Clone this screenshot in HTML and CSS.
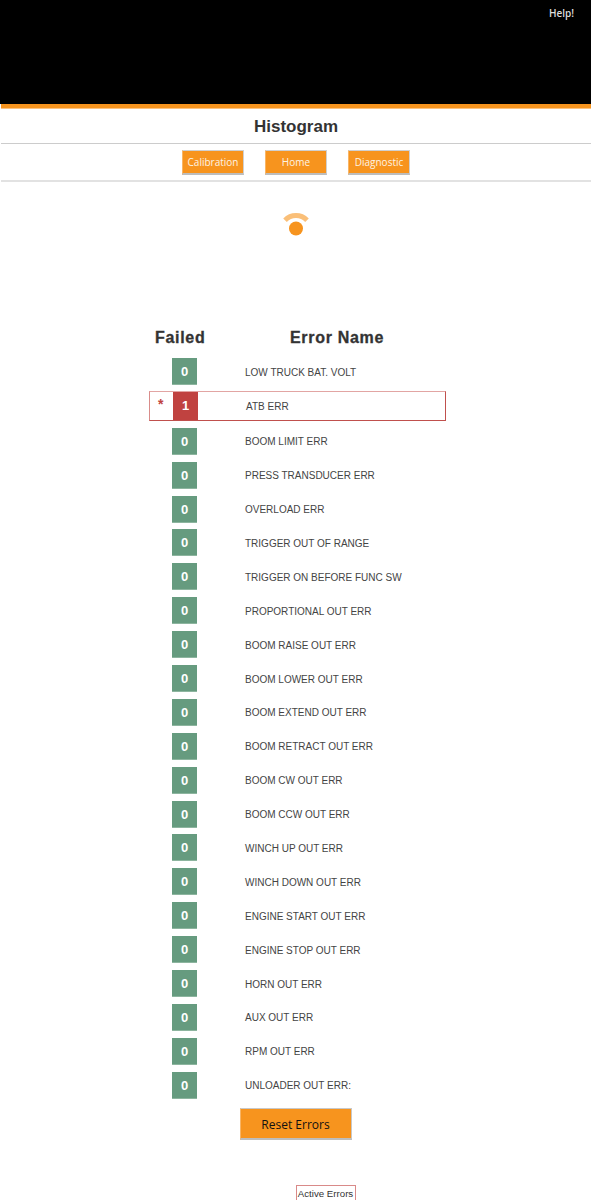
FILE: index.html
```html
<!DOCTYPE html>
<html lang="en">
<head>
    <meta charset="UTF-8">
    <meta name="viewport" content="width=device-width, initial-scale=1.0">
    <title>Histogram</title>
    <link rel="stylesheet" href="styles.css">
</head>
<body>
    <div class="header">
        <a href="#" class="help">Help!</a>
    </div>
    <div class="header-bar"></div>

    <h1 class="page-title">Histogram</h1>

    <div class="nav">
        <a href="#" class="nav-btn">Calibration</a>
        <a href="#" class="nav-btn">Home</a>
        <a href="#" class="nav-btn">Diagnostic</a>
    </div>

    <div class="signal">
        <svg width="26" height="24" viewBox="0 0 26 24">
            <path class="signal-arc" d="M2 7.2 A15.5 15.5 0 0 1 24 7.2"/>
            <circle class="signal-dot" cx="13" cy="15.5" r="7"/>
        </svg>
    </div>

    <div class="errors">
        <div class="errors-head">
            <div class="head-failed">Failed</div>
            <div class="head-name">Error Name</div>
        </div>

        <div class="error-row"><span class="count">0</span><span class="error-name">LOW TRUCK BAT. VOLT</span></div>
        <div class="error-row active"><span class="star">*</span><span class="count">1</span><span class="error-name">ATB ERR</span></div>
        <div class="error-row"><span class="count">0</span><span class="error-name">BOOM LIMIT ERR</span></div>
        <div class="error-row"><span class="count">0</span><span class="error-name">PRESS TRANSDUCER ERR</span></div>
        <div class="error-row"><span class="count">0</span><span class="error-name">OVERLOAD ERR</span></div>
        <div class="error-row"><span class="count">0</span><span class="error-name">TRIGGER OUT OF RANGE</span></div>
        <div class="error-row"><span class="count">0</span><span class="error-name">TRIGGER ON BEFORE FUNC SW</span></div>
        <div class="error-row"><span class="count">0</span><span class="error-name">PROPORTIONAL OUT ERR</span></div>
        <div class="error-row"><span class="count">0</span><span class="error-name">BOOM RAISE OUT ERR</span></div>
        <div class="error-row"><span class="count">0</span><span class="error-name">BOOM LOWER OUT ERR</span></div>
        <div class="error-row"><span class="count">0</span><span class="error-name">BOOM EXTEND OUT ERR</span></div>
        <div class="error-row"><span class="count">0</span><span class="error-name">BOOM RETRACT OUT ERR</span></div>
        <div class="error-row"><span class="count">0</span><span class="error-name">BOOM CW OUT ERR</span></div>
        <div class="error-row"><span class="count">0</span><span class="error-name">BOOM CCW OUT ERR</span></div>
        <div class="error-row"><span class="count">0</span><span class="error-name">WINCH UP OUT ERR</span></div>
        <div class="error-row"><span class="count">0</span><span class="error-name">WINCH DOWN OUT ERR</span></div>
        <div class="error-row"><span class="count">0</span><span class="error-name">ENGINE START OUT ERR</span></div>
        <div class="error-row"><span class="count">0</span><span class="error-name">ENGINE STOP OUT ERR</span></div>
        <div class="error-row"><span class="count">0</span><span class="error-name">HORN OUT ERR</span></div>
        <div class="error-row"><span class="count">0</span><span class="error-name">AUX OUT ERR</span></div>
        <div class="error-row"><span class="count">0</span><span class="error-name">RPM OUT ERR</span></div>
        <div class="error-row"><span class="count">0</span><span class="error-name">UNLOADER OUT ERR:</span></div>
    </div>

    <div class="reset">
        <button class="reset-btn">Reset Errors</button>
    </div>

    <div class="footer">
        <a href="#" class="active-errors">Active Errors</a>
    </div>
</body>
</html>
```

FILE: styles.css
```css
* {
    margin: 0;
    padding: 0;
    box-sizing: border-box;
}

html, body {
    height: 1200px;
    overflow: hidden;
}

body {
    background-color: white;
    font-family: 'Liberation Sans', Arial, sans-serif;
}

.header {
    display: flex;
    justify-content: flex-end;
    height: 104px;
    padding: 7px 17px 0 0;
    background-color: black;
}

.help {
    color: #ddd;
    font-family: 'Open Sans', sans-serif;
    font-size: 10px;
    font-weight: 600;
    line-height: 13px;
    text-decoration: none;
}

.header-bar {
    height: 5px;
    margin-left: 1px;
    background-color: #f7941e;
    border-bottom: 1px solid #fbc27f;
}

.page-title {
    height: 35px;
    margin-left: 1px;
    border-bottom: 1px solid #ccc;
    color: #333;
    font-size: 17px;
    font-weight: bold;
    line-height: 35px;
    text-align: center;
}

.nav {
    display: flex;
    justify-content: center;
    gap: 21px;
    height: 38px;
    margin-left: 1px;
    padding-top: 6px;
    border-bottom: 2px solid #e2e2e2;
}

.nav-btn {
    width: 62px;
    height: 25px;
    background-color: #f7941e;
    border: 1px solid #d0d0d0;
    border-left-color: #f9b565;
    border-bottom: 2px solid #bdbdbd;
    color: #fdf3e4;
    font-family: 'Open Sans', sans-serif;
    font-size: 10px;
    line-height: 23px;
    text-align: center;
    text-decoration: none;
}

.signal {
    display: flex;
    justify-content: center;
    height: 144px;
    padding-top: 31px;
}

.signal svg {
    overflow: visible;
}

.signal-arc {
    fill: none;
    stroke: #f7941e;
    stroke-opacity: 0.6;
    stroke-width: 5;
}

.signal-dot {
    fill: #f7941e;
}

.errors {
    display: flex;
    flex-direction: column;
    gap: 6.9px;
    width: 297px;
    margin-left: 149px;
}

.errors-head {
    display: flex;
    height: 27px;
    margin-bottom: -1.9px;
    padding-top: 3px;
    color: #333;
    font-size: 16px;
    font-weight: bold;
    line-height: 18px;
    letter-spacing: 0.7px;
    -webkit-text-stroke: 0.3px #333;
}

.head-failed {
    width: 141px;
    padding-left: 6px;
}

.error-row {
    display: flex;
    align-items: center;
    height: 27px;
    padding-left: 23px;
}

.count {
    width: 25px;
    height: 27px;
    background-color: #669b7f;
    border-bottom: 1px solid #8db59f;
    color: white;
    font-size: 13px;
    font-weight: bold;
    line-height: 27px;
    text-align: center;
}

.error-name {
    margin: 1px 0 0 48px;
    color: #444;
    font-size: 10px;
}

.error-row.active {
    height: 30px;
    margin: -0.5px 0 -0.5px;
    padding-left: 8px;
    border: 1px solid #c0504d;
    border-top-color: #e2a5a3;
    border-left-color: #d98c8a;
}

.active .count {
    height: 28px;
    background-color: #c04240;
    border-bottom: 0;
    line-height: 28px;
}

.star {
    width: 15px;
    margin-bottom: 5px;
    color: #c04240;
    font-size: 14px;
    font-weight: bold;
}

.reset {
    display: flex;
    justify-content: center;
    padding-top: 9px;
}

.reset-btn {
    width: 112px;
    height: 32px;
    padding-top: 2px;
    background-color: #f7941e;
    border: 1px solid #c8c8c8;
    border-left-color: #f9b565;
    border-bottom: 2px solid #bdbdbd;
    color: #111;
    font-family: 'Open Sans', sans-serif;
    font-size: 12px;
}

.footer {
    display: flex;
    justify-content: center;
    padding: 45px 0 0 60px;
}

.active-errors {
    width: 60px;
    height: 24px;
    border: 1px solid #d98a89;
    color: #333;
    font-size: 9.7px;
    line-height: 15px;
    text-align: center;
    text-decoration: none;
    white-space: nowrap;
}
```
